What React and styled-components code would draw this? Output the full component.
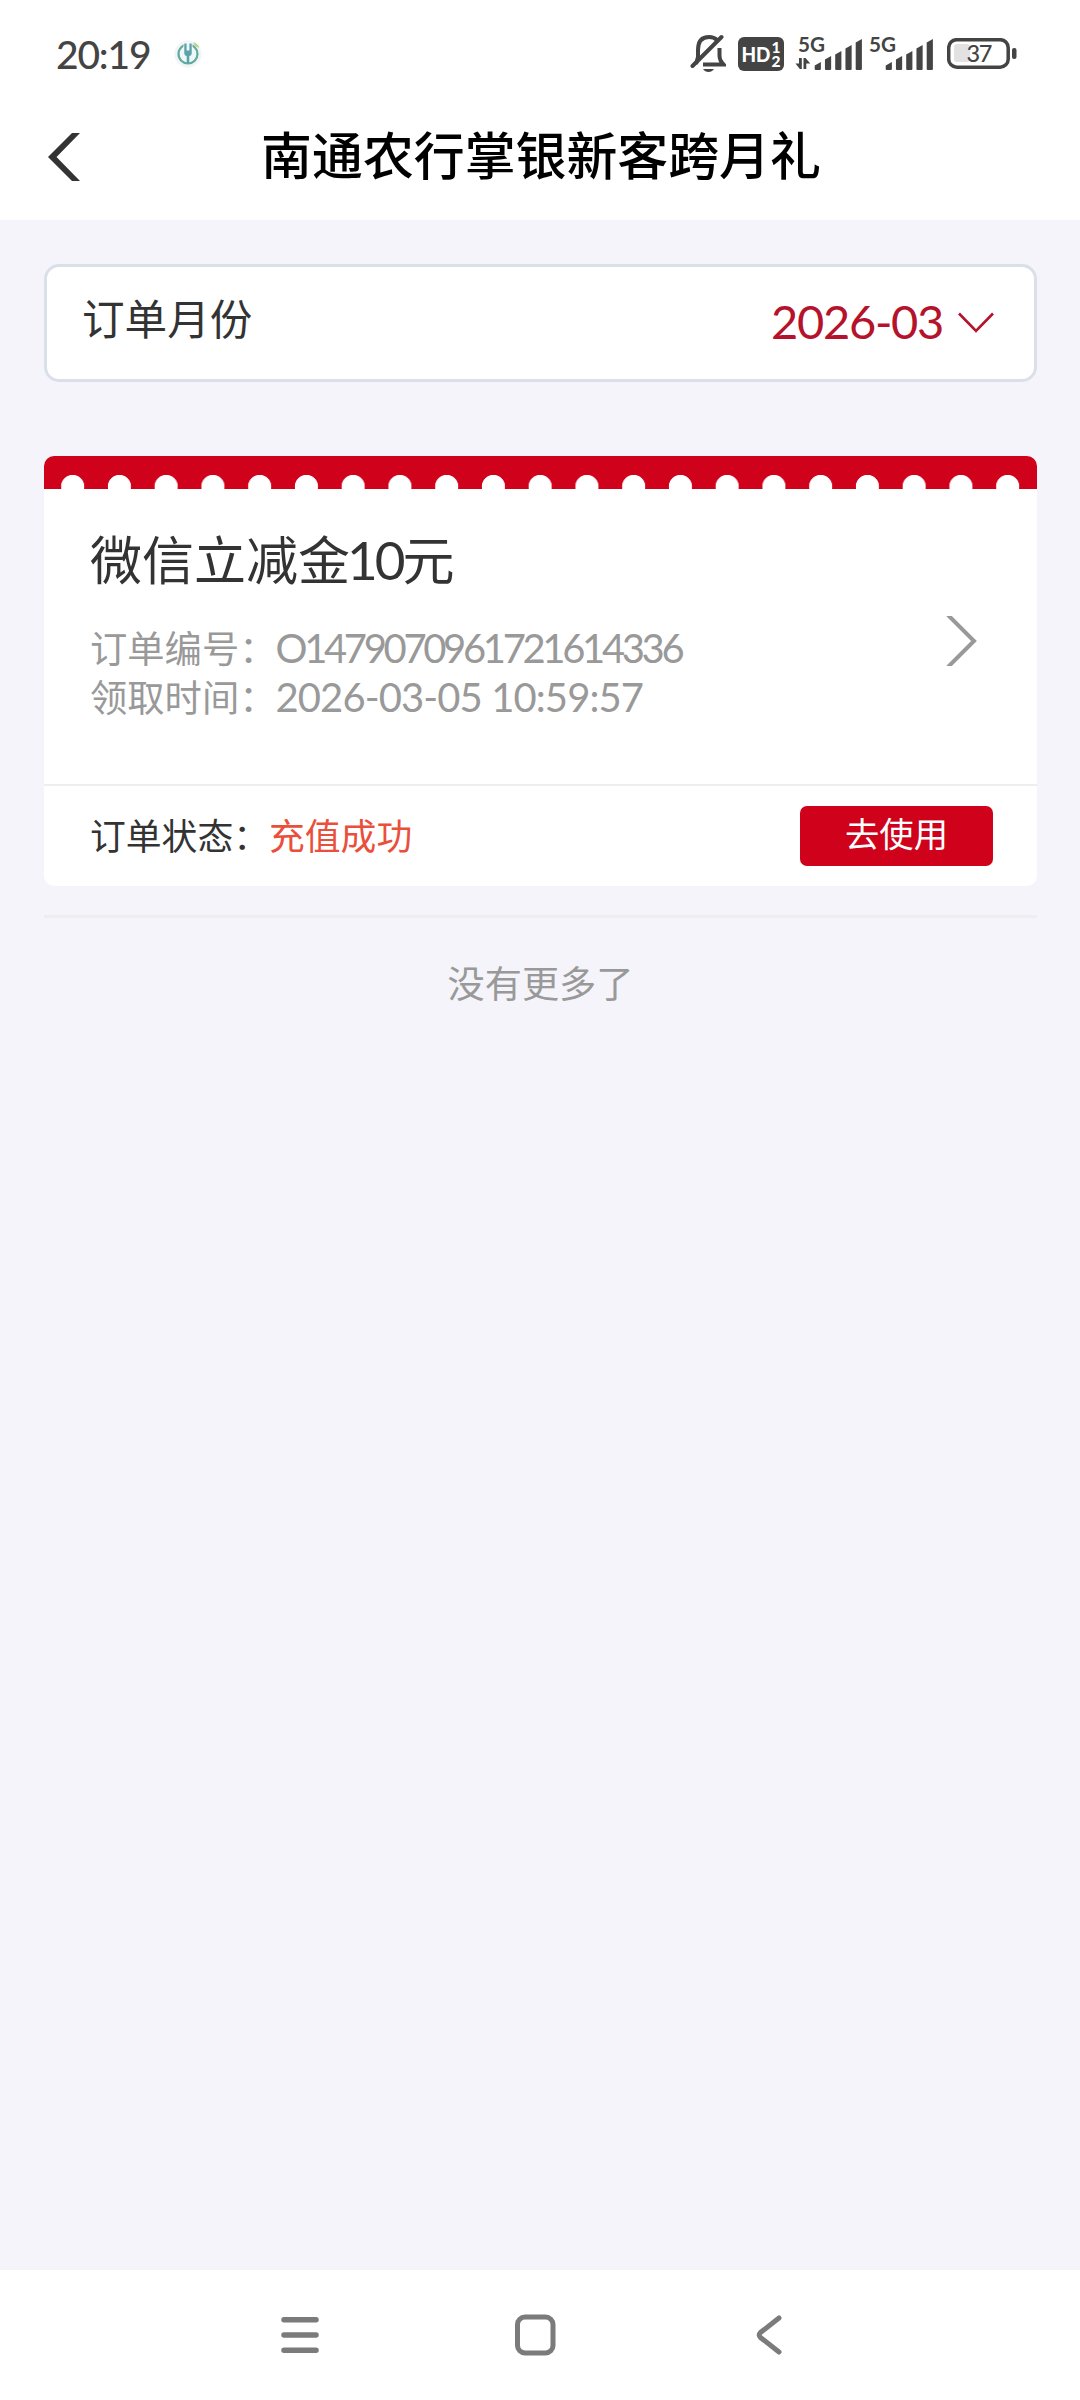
import styled, { createGlobalStyle } from "styled-components";

const GlobalStyle = createGlobalStyle`
  * {
    box-sizing: border-box;
  }

  body {
    margin: 0;
    background-color: #f4f4fa;
    font-family: Lato, "Noto Sans CJK SC", sans-serif;
    color: #333;
  }

  svg {
    display: block;
    flex-shrink: 0;
  }
`;

const Page = styled.div`
  display: flex;
  flex-direction: column;
  width: 1080px;
  height: 2400px;
  overflow: hidden;
`;

const StatusBar = styled.header`
  display: flex;
  align-items: center;
  height: 108px;
  padding: 0 63px 0 56px;
  background-color: #fff;
`;

const Clock = styled.span`
  width: 117px;
  font-size: 39px;
  font-weight: 500;
  line-height: 108px;
  letter-spacing: -1.2px;
  color: #444;
`;

const StatusIcons = styled.div`
  display: flex;
  align-items: center;
  margin-left: auto;
`;

const Gap = styled.div`
  width: ${({ $w }) => $w}px;
`;

const TitleBar = styled.div`
  display: flex;
  align-items: center;
  height: 112px;
  padding: 0 48px;
  background-color: #fff;
`;

const PageTitle = styled.h1`
  flex: 1;
  margin: 0;
  padding: 0 30px 16px 0;
  font-size: 50.9px;
  font-weight: 500;
  line-height: 96px;
  text-align: center;
  white-space: nowrap;
  color: #000;
`;

const Main = styled.main`
  flex: 1;
  padding: 44px 43px 0 44px;
`;

const MonthPicker = styled.div`
  display: flex;
  align-items: center;
  height: 118px;
  padding: 0 40px 0 35px;
  background-color: #fff;
  border: 3px solid #d9e0ea;
  border-radius: 15px;
`;

const PickerLabel = styled.span`
  padding-bottom: 9px;
  font-size: 42.6px;
  line-height: 60px;
`;

const PickerValue = styled.span`
  margin: 0 15px 0 auto;
  padding-bottom: 4px;
  font-size: 47px;
  line-height: 60px;
  letter-spacing: -1.3px;
  color: #b5122b;
`;

const Card = styled.section`
  display: flex;
  flex-direction: column;
  height: 430px;
  margin-top: 74px;
  background-color: #fff;
  border-radius: 10px;
  overflow: hidden;
`;

const Scallops = styled.div`
  height: 33px;
  background: radial-gradient(
      circle at 50% 30.5px,
      #fff 11.2px,
      transparent 12px
    )
    5.3px 0 / 46.76px 33px repeat-x #d0021b;
`;

const CardBody = styled.div`
  display: flex;
  align-items: center;
  height: 297px;
  padding: 0 59px 0 46px;
  border-bottom: 2px solid #eee;
`;

const OrderInfo = styled.div`
  flex: 1;
  height: 100%;
  padding-top: 31px;
`;

const OrderName = styled.h2`
  margin: 0;
  font-size: 52px;
  font-weight: 400;
  line-height: 80px;
`;

const NameDigits = styled.span`
  margin-left: -3px;
  font-size: 53px;
  letter-spacing: -3px;
`;

const OrderLine = styled.p`
  display: flex;
  margin: 0;
  padding-top: ${({ $first }) => ($first ? "24px" : "0")};
  font-size: 37.3px;
  line-height: 49px;
  color: #999;
`;

const LineValue = styled.span`
  margin-left: -1px;
  font-size: 40px;
  letter-spacing: ${({ $spacing }) => $spacing};
`;

const CardFooter = styled.div`
  display: flex;
  align-items: center;
  height: 100px;
  padding: 0 44px 0 46px;
  font-size: 35.8px;
`;

const StatusLabel = styled.span`
  padding-bottom: 4px;
`;

const StatusText = styled.span`
  color: #e94f3a;
`;

const UseButton = styled.button`
  width: 193px;
  height: 60px;
  margin-left: auto;
  padding: 0 0 4px;
  border: none;
  border-radius: 7px;
  background-color: #d0021b;
  color: #fff;
  font-family: inherit;
  font-size: 34.3px;
  line-height: 56px;
`;

const DetailArrow = styled.svg`
  margin-top: 9px;
`;

const NoMore = styled.div`
  margin-top: 29px;
  padding-top: 36px;
  border-top: 3px solid #eeeef1;
  font-size: 37.2px;
  line-height: 60px;
  text-align: center;
  color: #999;
`;

const NavBar = styled.nav`
  display: flex;
  align-items: center;
  height: 130px;
  padding-left: 280px;
  background-color: #fff;
`;

const HomeIcon = styled.svg`
  margin: 0 199px 0 194px;
`;

const BARS = [62, 56, 51, 45, 39];

function AppBadge() {
  return (
    <svg width="30" height="30" viewBox="0 0 30 30">
      <circle cx="15" cy="15" r="13.5" fill="#f3f5f5" />
      <circle cx="15" cy="15" r="9.5" fill="#eef8f8" stroke="#62ab9f" strokeWidth="2.2" />
      <path d="M10.500 3h9v8h-9z" fill="#f3f8f8" />
      <path d="M11.300 4.500h2.300v7h2.800v-7h2.300v10q0 2-2.400 2.500V24h-2.600v-7q-2.400-.5-2.400-2.500z" fill="#5aa3ab" />
      <path d="M20 3.500q4 0 6.500 5-4.500 0-6.500-5z" fill="#b9d78c" />
    </svg>
  );
}

function BellOff() {
  return (
    <svg width="36" height="40" viewBox="690 35 36 40" fill="none" stroke="#444" strokeWidth="4">
      <path d="M698 59V51q0-13 11-13 5 0 8 3" />
      <path d="M696 65l2-7M703 65.5h20.5q-4-4-4-9V49" />
      <path d="M692.5 67L721.5 38" strokeLinecap="round" />
      <path d="M703 70h11q-2 3-5.500 3t-5.500-3z" fill="#444" stroke="none" />
    </svg>
  );
}

function HdBadge() {
  return (
    <svg width="46" height="34" viewBox="0 0 46 34" fontFamily="Lato, sans-serif" fontWeight="900" fill="#fff">
      <rect width="46" height="34" rx="6" fill="#444" />
      <text x="3.5" y="24.5" fontSize="20.5" textLength="29" lengthAdjust="spacingAndGlyphs">
        HD
      </text>
      <text x="33.5" y="15.5" fontSize="15.5">1</text>
      <text x="33.5" y="29.8" fontSize="15.5">2</text>
    </svg>
  );
}

function Signal({ traffic }) {
  return (
    <svg width="68" height="52" viewBox="-3 28 68 52" fill="#444">
      <text
        x="0"
        y="52"
        fontFamily="Lato, sans-serif"
        fontWeight="700"
        fontSize="21"
        textLength="27"
        lengthAdjust="spacingAndGlyphs"
      >
        5G
      </text>
      {traffic && <path d="M1 58h2.800v11H1.800L-2.500 63.500H1zM5.500 69V58h2l4.800 5.500h-4V69z" />}
      {BARS.map((top, i) => (
        <path
          key={top}
          d={`M${16.7 + i * 10.25} ${top + 3.5}l6.200-3.500V69q0 1-1 1h-4.200q-1 0-1-1z`}
        />
      ))}
    </svg>
  );
}

function Battery() {
  return (
    <svg width="70" height="32" viewBox="0 0 70 32">
      <rect x="7" y="6" width="16" height="18" rx="3" fill="#e2e2e2" />
      <rect x="1.7" y="1.7" width="59.5" height="27.5" rx="8" fill="none" stroke="#444" strokeWidth="3.5" />
      <rect x="65" y="10" width="4.5" height="11" rx="2" fill="#444" />
      <text x="19.5" y="24" fontFamily="Lato, sans-serif" fontWeight="500" fontSize="23.5" textLength="26" fill="#444">
        37
      </text>
    </svg>
  );
}

function App() {
  return (
    <Page>
      <GlobalStyle />
      <StatusBar>
        <Clock>20:19</Clock>
        <AppBadge />
        <StatusIcons>
          <BellOff />
          <Gap $w={12} />
          <HdBadge />
          <Gap $w={11} />
          <Signal traffic />
          <Gap $w={3} />
          <Signal />
          <Gap $w={13} />
          <Battery />
        </StatusIcons>
      </StatusBar>

      <TitleBar>
        <svg width="32" height="62" viewBox="0 0 32 62">
          <path d="M32 0H24L0 24l24 24h8L8.500 24z" fill="#333" />
        </svg>
        <PageTitle>南通农行掌银新客跨月礼</PageTitle>
      </TitleBar>

      <Main>
        <MonthPicker>
          <PickerLabel>订单月份</PickerLabel>
          <PickerValue>2026-03</PickerValue>
          <svg width="36" height="22" viewBox="0 0 36 22" fill="none" stroke="#b5122b" strokeWidth="2.6">
            <path d="M1 1.500l17 17.500L35 1.500" />
          </svg>
        </MonthPicker>

        <Card>
          <Scallops />
          <CardBody>
            <OrderInfo>
              <OrderName>
                微信立减金<NameDigits>10</NameDigits>元
              </OrderName>
              <OrderLine $first>
                订单编号：<LineValue $spacing="-3.35px">O1479070961721614336</LineValue>
              </OrderLine>
              <OrderLine>
                领取时间：<LineValue $spacing="-0.9px">2026-03-05 10:59:57</LineValue>
              </OrderLine>
            </OrderInfo>
            <DetailArrow width="32" height="50" viewBox="0 0 32 50" fill="none" stroke="#999" strokeWidth="4">
              <path d="M2 -1l26 26L2 51" />
            </DetailArrow>
          </CardBody>
          <CardFooter>
            <StatusLabel>
              订单状态：<StatusText>充值成功</StatusText>
            </StatusLabel>
            <UseButton>去使用</UseButton>
          </CardFooter>
        </Card>

        <NoMore>没有更多了</NoMore>
      </Main>

      <NavBar>
        <svg width="40" height="42" viewBox="0 0 40 42" stroke="#7b7b7b" strokeWidth="5.5" strokeLinecap="round">
          <path d="M4 5.700h32M4 21h32M4 36.300h32" />
        </svg>
        <HomeIcon width="42" height="42" viewBox="0 0 42 42" fill="none" stroke="#7b7b7b" strokeWidth="5">
          <rect x="3.5" y="3" width="35.500" height="36" rx="7.5" />
        </HomeIcon>
        <svg width="28" height="42" viewBox="0 0 28 42" fill="none" stroke="#7b7b7b" strokeWidth="5" strokeLinecap="round">
          <path d="M24 4L5.500 18.500q-2.600 2.500 0 5L24 38" />
        </svg>
      </NavBar>
    </Page>
  );
}

export default App;
